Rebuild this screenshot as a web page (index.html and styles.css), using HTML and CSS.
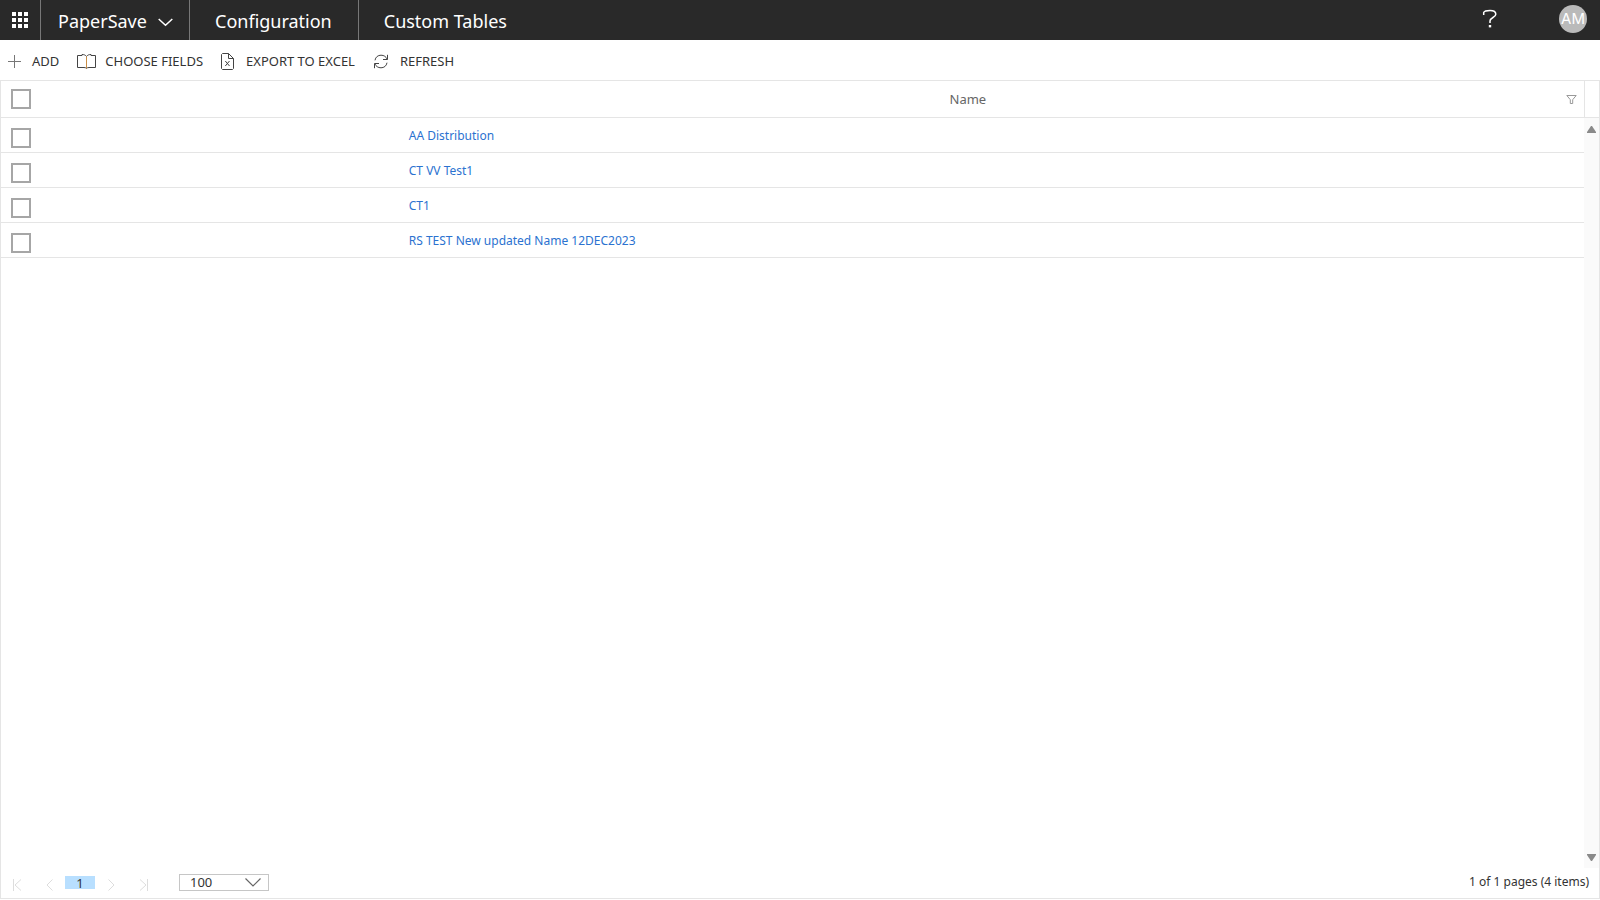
FILE: index.html
```html
<!DOCTYPE html>
<html lang="en">
<head>
<meta charset="utf-8">
<title>Custom Tables</title>
<link rel="stylesheet" href="styles.css">
</head>
<body>
<header class="topbar">
  <button class="launcher" aria-label="App launcher">
    <svg width="16" height="16" viewBox="0 0 16 16" fill="#fff"><path d="M0 0h4v4H0zM6 0h4v4H6zM12 0h4v4h-4zM0 6h4v4H0zM6 6h4v4H6zM12 6h4v4h-4zM0 12h4v4H0zM6 12h4v4H6zM12 12h4v4h-4z"/></svg>
  </button>
  <button class="brand">PaperSave
    <svg width="15" height="9" viewBox="0 0 15 9" fill="none" stroke="#fff" stroke-width="1.5"><path d="M.7 1l6.8 6.3L14.3 1"/></svg>
  </button>
  <nav class="crumbs">
    <a class="crumb" href="#">Configuration</a>
    <a class="crumb" href="#">Custom Tables</a>
  </nav>
  <button class="help" aria-label="Help">
    <svg width="16" height="20" viewBox="0 0 16 20" fill="none" stroke="#fff" stroke-width="1.5"><path d="M1.700 6V3.500C2.500 1.700 5 1.500 8 1.500c3.500 0 5.800 1.200 5.800 3.700C13.800 8.500 8 8.500 8 12v2"/><path d="M6.800 16h2.400v2.400H6.800z" fill="#fff" stroke="none"/></svg>
  </button>
  <button class="avatar">AM</button>
</header>

<div class="toolbar">
  <button class="tool tool-add">
    <svg width="13" height="13" viewBox="0 0 13 13" fill="none" stroke="#777"><path d="M6.500 0v13M0 6.500h13"/></svg>
    ADD</button>
  <button class="tool tool-fields">
    <svg width="19" height="15" viewBox="0 0 19 15" fill="none" stroke="#444"><path d="M9.500 2.500C8.500 1 7 .5 5 .5v1H.5v12H7c1.200 0 2 .3 2.500 1 .5-.7 1.300-1 2.500-1h6.500v-12H14v-1c-2 0-3.500.5-4.500 2z"/><path d="M9.500 2.500v12" stroke="#c98d45"/></svg>
    CHOOSE FIELDS</button>
  <button class="tool tool-export">
    <svg width="13" height="17" viewBox="0 0 13 17" fill="none" stroke="#444"><path d="M1.500.5h6l5 5v10l-1 1h-10l-1-1v-14z"/><path d="M7.500.5v5h5M4.300 8l4.200 5M8.500 8l-4.200 5"/></svg>
    EXPORT TO EXCEL</button>
  <button class="tool tool-refresh">
    <svg width="16" height="15" viewBox="0 0 16 15" fill="none" stroke="#444"><path d="M2 6.300C2.500 3 5 1.200 8 1.200c3 0 5 1.500 6.200 4M14.500.8v4.700H10M14 8.700c-.5 3.300-3 5.100-6 5.100s-5-1.500-6.200-4M1.500 14.200V9.500H6"/></svg>
    REFRESH</button>
</div>

<main class="grid">
  <div class="grid-body">
    <table class="records">
      <thead>
        <tr>
          <th class="pick"><input class="box" type="checkbox" aria-label="Select all"></th>
          <th class="name"><div class="name-head"><span class="name-label">Name</span>
            <button class="filter" aria-label="Filter by name"><svg width="11" height="9" viewBox="0 0 11 9" fill="none" stroke="#999"><path d="M.8.500h9.400L6.700 4.700v3.800H4.300V4.700z"/></svg></button></div></th>
        </tr>
      </thead>
      <tbody>
        <tr><td class="pick"><input class="box" type="checkbox" aria-label="Select AA Distribution"></td><td class="name"><a href="#">AA Distribution</a></td></tr>
        <tr><td class="pick"><input class="box" type="checkbox" aria-label="Select CT VV Test1"></td><td class="name"><a href="#">CT VV Test1</a></td></tr>
        <tr><td class="pick"><input class="box" type="checkbox" aria-label="Select CT1"></td><td class="name"><a href="#">CT1</a></td></tr>
        <tr><td class="pick"><input class="box" type="checkbox" aria-label="Select RS TEST New updated Name 12DEC2023"></td><td class="name"><a href="#">RS TEST New updated Name 12DEC2023</a></td></tr>
      </tbody>
    </table>
    <div class="gutter">
      <div class="gutter-head"></div>
      <div class="track">
        <svg width="9" height="7" viewBox="0 0 9 7" fill="#8a8a8a"><path d="M4 0h1l4 6v1H0V6z"/></svg>
        <svg width="9" height="7" viewBox="0 0 9 7" fill="#8a8a8a"><path d="M0 0h9v1L5 7H4L0 1z"/></svg>
      </div>
    </div>
  </div>
  <footer class="pager">
    <button class="step" aria-label="First page"><svg width="9" height="12" viewBox="0 0 9 12"><path d="M.5 0v12M8 .5L2 6l6 5.500"/></svg></button>
    <button class="step" aria-label="Previous page"><svg width="9" height="12" viewBox="0 0 9 12"><path d="M7.500.5L2 6l5.500 5.500"/></svg></button>
    <button class="page">1</button>
    <button class="step" aria-label="Next page"><svg width="9" height="12" viewBox="0 0 9 12"><path d="M1.500.5L7 6l-5.500 5.500"/></svg></button>
    <button class="step" aria-label="Last page"><svg width="9" height="12" viewBox="0 0 9 12"><path d="M8.500 0v12M1 .5L7 6l-6 5.500"/></svg></button>
    <div class="size">
      <select class="size-select" aria-label="Items per page"><option>100</option></select>
      <svg class="size-arrow" width="16" height="9" viewBox="0 0 16 9" fill="none" stroke="#666" stroke-width="1.200"><path d="M.5.500L8 8l7.500-7.500"/></svg>
    </div>
    <span class="summary">1 of 1 pages (4 items)</span>
  </footer>
</main>
</body>
</html>
```
FILE: styles.css
```css
* { box-sizing: border-box; }
body {
  margin: 0;
  min-height: 100vh;
  display: flex;
  flex-direction: column;
  padding-bottom: 1px;
  background: #fff;
  color: #333;
  font: 13px/20px "Noto Sans", "Open Sans", sans-serif;
}
button {
  margin: 0;
  padding: 0;
  border: 0;
  background: none;
  color: inherit;
  font: inherit;
  cursor: pointer;
}
a { text-decoration: none; }
svg { display: block; flex: none; }

.topbar {
  display: flex;
  height: 40px;
  background: #292929;
  color: #fff;
  font-size: 18px;
}
.launcher {
  width: 41px;
  padding-left: 12px;
  border-right: 1px solid #777;
}
.brand {
  display: flex;
  align-items: center;
  gap: 11px;
  width: 149px;
  padding: 2px 0 0 17px;
  border-right: 1px solid #777;
}
.brand svg { margin-top: 3px; }
.crumbs { display: flex; flex: 1; }
.crumb {
  display: flex;
  align-items: center;
  padding: 2px 26px 0 25px;
  color: #fff;
}
.crumb + .crumb { border-left: 1px solid #777; }
.help { margin-right: 61px; padding-bottom: 3px; }
.avatar {
  width: 28px;
  height: 28px;
  margin: 5px 13px 0 0;
  border-radius: 50%;
  background: #bababa;
  font: 15px/28px Inter, sans-serif;
}

.toolbar {
  display: flex;
  height: 40px;
  padding: 2px 0 0 8px;
  gap: 18px;
}
.tool {
  display: flex;
  align-items: center;
  gap: 9px;
  white-space: nowrap;
}
.tool svg { margin-top: 1px; }
.tool-add { gap: 11px; }
.tool-export { gap: 12px; }
.tool-refresh { gap: 11px; }

.grid {
  flex: 1;
  display: flex;
  flex-direction: column;
  border: 1px solid #e5e5e5;
}
.grid-body { flex: 1; display: flex; align-items: flex-start; }
.records {
  flex: 1;
  border-collapse: separate;
  border-spacing: 0;
  table-layout: fixed;
}
.records th, .records td {
  padding: 0;
  border-bottom: 1px solid #e5e5e5;
  text-align: left;
  font-weight: 400;
}
.records th { height: 37px; color: #666; }
.records td { height: 35px; }
.records .pick { width: 25%; padding-left: 10px; }
.records td.pick { padding-top: 5px; }
.records td.name { padding: 2px 0 0 12px; font-size: 12px; }
.records a { color: #2b72d0; }
.box {
  display: block;
  appearance: none;
  width: 20px;
  height: 20px;
  margin: 0;
  border: 2px solid #a6a6a6;
  background: #fff;
}
.name-head { display: flex; align-items: center; }
.name-label { flex: 1; text-align: center; }
.filter { width: 45px; padding-left: 27px; }

.gutter {
  align-self: stretch;
  display: flex;
  flex-direction: column;
  width: 15px;
}
.gutter-head {
  height: 37px;
  border-bottom: 1px solid #e5e5e5;
  border-left: 1px solid #e5e5e5;
}
.track {
  flex: 1;
  display: flex;
  flex-direction: column;
  justify-content: space-between;
  align-items: center;
  padding: 8px 0 7px;
  background: #fafafa;
}

.pager {
  display: flex;
  align-items: center;
  height: 30px;
  padding: 0 10px 0 12px;
}
.step { width: 9px; margin-top: 4px; }
.step + .step { margin-left: 23px; }
.step svg { fill: none; stroke: #ddd; }
.page {
  width: 30px;
  height: 13px;
  margin: 0 12px 1px 11px;
  background: #b8dfff;
  line-height: 14px;
}
.size { position: relative; margin: 0 0 1px 31px; }
.size-select {
  display: block;
  appearance: none;
  width: 90px;
  height: 17px;
  padding: 0 10px;
  border: 1px solid #c6c6c6;
  border-radius: 0;
  background: #fff;
  color: #333;
  font: 13px/15px "Noto Sans", sans-serif;
}
.size-arrow { position: absolute; right: 8px; top: 4px; pointer-events: none; }
.summary { margin-left: auto; font-size: 12px; padding-bottom: 2px; }
```
